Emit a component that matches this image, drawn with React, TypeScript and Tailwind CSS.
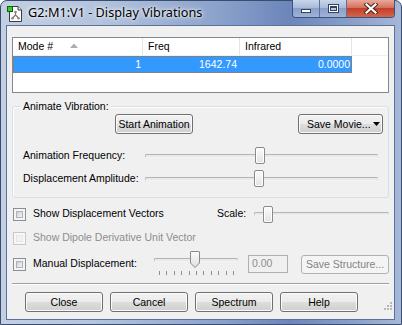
import React from "react";

function Btn({
  children,
  className = "",
  disabled = false,
}: {
  children: React.ReactNode;
  className?: string;
  disabled?: boolean;
}) {
  return (
    <div
      className={
        "flex items-center justify-center rounded-[3px] border text-[10.5px] leading-none " +
        (disabled
          ? "border-[#adb2b5] bg-[#f4f4f4] text-[#838383] "
          : "border-[#707070] bg-[linear-gradient(#f2f2f2_0%,#ebebeb_50%,#dddddd_50%,#cfcfcf_100%)] text-black shadow-[inset_0_0_0_1px_#fbfbfb] ") +
        className
      }
    >
      {children}
    </div>
  );
}

function Thumb() {
  return (
    <div className="w-[10px] h-[17px] rounded-[2px] border border-[#8a8a8a] bg-[linear-gradient(#fbfbfb,#e3e3e3)] shadow-[inset_0_0_0_1px_#ffffff]" />
  );
}

function Track({ className = "" }: { className?: string }) {
  return (
    <div className={"h-[4px] rounded-[1px] border border-t-[#b4b4b4] border-l-[#c8c8c8] border-r-[#e0e0e0] border-b-[#f4f4f4] bg-[#e7eaea] " + className} />
  );
}

function Check({ disabled = false }: { disabled?: boolean }) {
  return (
    <div
      className={
        "w-[13px] h-[13px] border p-[2px] " +
        (disabled ? "border-[#c8c8c8] bg-[#f7f7f7]" : "border-[#8e8f8f] bg-[#f4f4f4]")
      }
    >
      <div
        className={
          "w-full h-full border " +
          (disabled
            ? "border-[#e6e6e6] bg-[#f2f2f2]"
            : "border-[#aeb3b9] bg-[linear-gradient(135deg,#cbcfd5,#f6f6f6)]")
        }
      />
    </div>
  );
}

export default function App() {
  return (
    <div className="w-[402px] h-[325px] overflow-hidden font-['Liberation_Sans',Arial,sans-serif] text-[10.5px] text-black">
      <div className="w-[402px] h-[325px] flex flex-col rounded-t-[7px] border border-[#3a4d6e] bg-[linear-gradient(90deg,#c3d0e3_0%,#b2c3dc_25%,#8aa1cb_55%,#6c86bb_72%,#8aa0c9_88%,#a6b8d8_100%)]">
        {/* Title bar */}
        <div className="h-[24px] flex items-center pl-[6px] pr-[6px] shrink-0">
          <svg width="16" height="17" viewBox="0 0 16 17" className="shrink-0">
            <path d="M2.5 1.5 H11 L14.5 5 V16.5 H2.5 Z" fill="#ffffff" stroke="#3a3a3a" />
            <path d="M11 1.5 V5 H14.5" fill="#e8e8e8" stroke="#3a3a3a" />
            <rect x="0.5" y="1.5" width="5" height="5" fill="#2fd12f" stroke="#136013" />
            <path d="M8.5 7 V10 M8.5 10 L5.5 13 M8.5 10 L11.5 13" stroke="#7a7a7a" strokeWidth="1.2" />
            <circle cx="8.5" cy="7" r="1.3" fill="#8a8a8a" />
            <circle cx="5.5" cy="13.3" r="1.3" fill="#8a8a8a" />
            <circle cx="11.5" cy="13.3" r="1.3" fill="#8a8a8a" />
          </svg>
          <div className="ml-[5px] text-[12.7px] font-['Noto_Sans',sans-serif] text-black [text-shadow:0_0_6px_#ffffff,0_0_3px_#ffffff] whitespace-nowrap">
            G2:M1:V1 - Display Vibrations
          </div>
          <div className="ml-auto self-start -mt-[1px] flex h-[18px] rounded-b-[4px] border border-t-0 border-[#3c5380] overflow-hidden">
            <div className="w-[27px] h-full flex items-end justify-center pb-[4px] border-r border-[#5a709a] bg-[linear-gradient(#c9d6ea_0%,#a9bbd9_45%,#8aa0c9_50%,#9fb3d6_100%)]">
              <div className="w-[10px] h-[4px] bg-white border border-[#33435f]" />
            </div>
            <div className="w-[27px] h-full flex items-center justify-center border-r border-[#5a709a] bg-[linear-gradient(#c9d6ea_0%,#a9bbd9_45%,#8aa0c9_50%,#9fb3d6_100%)]">
              <div className="w-[11px] h-[9px] border border-[#33435f] bg-white p-[1px]">
                <div className="w-full h-full border border-[#33435f] border-t-2 bg-[#b8c6de]" />
              </div>
            </div>
            <div className="w-[47px] h-full flex items-center justify-center bg-[linear-gradient(#e9a99b_0%,#d6705d_45%,#c2402a_50%,#d5654c_100%)]">
              <svg width="14" height="11" viewBox="0 0 14 11">
                <path d="M2.5 1.5 L11.5 9.5 M11.5 1.5 L2.5 9.5" stroke="#4a2420" strokeWidth="4.2" strokeLinecap="square" />
                <path d="M2.5 1.5 L11.5 9.5 M11.5 1.5 L2.5 9.5" stroke="#ffffff" strokeWidth="2.2" strokeLinecap="square" />
              </svg>
            </div>
          </div>
        </div>

        {/* Client area */}
        <div className="ml-[5px] mr-[6px] h-[295px] shrink-0 border border-[#5d7299] bg-[#f0f0f0] flex flex-col px-[5px]">
          {/* List view */}
          <div className="mt-[11px] h-[56px] border border-[#828790] bg-white flex flex-col shrink-0">
            <div className="h-[18px] flex items-center border-b border-[#f0f0f0]">
              <div className="w-[130px] h-full flex items-center pl-[5px] border-r border-[#e5e5e5] relative">
                <span>Mode #</span>
                <svg width="8" height="5" viewBox="0 0 8 5" className="ml-[17px] mb-[2px]">
                  <path d="M0 5 L4 0.5 L8 5 Z" fill="#a8acb3" />
                </svg>
              </div>
              <div className="w-[97px] h-full flex items-center pl-[5px] border-r border-[#e5e5e5]">Freq</div>
              <div className="w-[112px] h-full flex items-center pl-[5px] border-r border-[#e5e5e5]">Infrared</div>
            </div>
            <div className="h-[17px] w-[339px] bg-[#3399ff] text-white border border-dotted border-[#c86a10] flex items-center">
              <div className="w-[128px] text-right pr-[1px]">1</div>
              <div className="w-[97px] text-right pr-[2px]">1642.74</div>
              <div className="w-[112px] text-right pr-[1px]">0.0000</div>
            </div>
          </div>

          {/* Group box */}
          <div className="mt-[13px] h-[92px] relative rounded-[3px] border border-[#d5dfe5] shadow-[inset_1px_1px_0_#ffffff] flex flex-col shrink-0">
            <div className="absolute left-[8px] -top-[8px] px-[2px] bg-[#f0f0f0] leading-[14px]">Animate Vibration:</div>
            <div className="mt-[7px] h-[20px] flex">
              <Btn className="ml-[102px] w-[78px] h-[20px]">Start Animation</Btn>
              <Btn className="ml-auto mr-[5px] w-[85px] h-[20px] justify-start pl-[8px]">
                <span>Save Movie...</span>
                <svg width="7" height="4" viewBox="0 0 7 4" className="ml-[2px]">
                  <path d="M0 0 H7 L3.5 4 Z" fill="#000" />
                </svg>
              </Btn>
            </div>
            <div className="mt-[13px] h-[17px] flex items-center">
              <div className="pl-[10px] w-[132px]">Animation Frequency:</div>
              <div className="relative w-[233px] h-[17px] flex items-center">
                <Track className="w-full" />
                <div className="absolute left-[110px] top-0">
                  <Thumb />
                </div>
              </div>
            </div>
            <div className="mt-[6px] h-[17px] flex items-center">
              <div className="pl-[10px] w-[132px]">Displacement Amplitude:</div>
              <div className="relative w-[233px] h-[17px] flex items-center">
                <Track className="w-full" />
                <div className="absolute left-[109px] top-0">
                  <Thumb />
                </div>
              </div>
            </div>
          </div>

          {/* Show Displacement Vectors */}
          <div className="mt-[4px] h-[24px] flex items-center shrink-0">
            <div className="ml-[1px]">
              <Check />
            </div>
            <div className="ml-[7px] w-[184px]">Show Displacement Vectors</div>
            <div className="w-[37px]">Scale:</div>
            <div className="relative w-[135px] h-[17px] flex items-center">
              <Track className="w-full" />
              <div className="absolute left-[9px] top-0">
                <Thumb />
              </div>
            </div>
          </div>

          {/* Dipole */}
          <div className="h-[24px] flex items-center shrink-0">
            <div className="ml-[1px]">
              <Check disabled />
            </div>
            <div className="ml-[7px] text-[#8d8d8d]">Show Dipole Derivative Unit Vector</div>
          </div>

          {/* Manual displacement */}
          <div className="h-[28px] flex items-center shrink-0">
            <div className="ml-[1px]">
              <Check />
            </div>
            <div className="ml-[7px] w-[121px]">Manual Displacement:</div>
            <div className="relative w-[85px] h-[28px]">
              <Track className="absolute left-0 top-[8px] w-[84px]" />
              <svg width="10" height="17" viewBox="0 0 10 17" className="absolute left-[36px] top-[1px]">
                <defs>
                  <linearGradient id="tg" x1="0" y1="0" x2="0" y2="1">
                    <stop offset="0" stopColor="#fbfbfb" />
                    <stop offset="1" stopColor="#e0e0e0" />
                  </linearGradient>
                </defs>
                <path d="M1 0.5 H9 Q9.5 0.5 9.5 1 V12 L5 16.5 L0.5 12 V1 Q0.5 0.5 1 0.5 Z" fill="url(#tg)" stroke="#8a8a8a" />
              </svg>
              <div className="absolute left-[5px] top-[21px] w-[75px] h-[4px] flex justify-between">
                {Array.from({ length: 11 }).map((_, i) => (
                  <div key={i} className="w-[1px] h-[4px] bg-[#8f8f8f]" />
                ))}
              </div>
            </div>
            <div className="ml-[9px] w-[40px] h-[18px] border border-[#afafaf] bg-[#f0f0f0] text-[#8d8d8d] flex items-center pl-[3px]">
              0.00
            </div>
            <Btn disabled className="ml-[13px] w-[88px] h-[19px]">
              Save Structure...
            </Btn>
          </div>

          {/* Separator */}
          <div className="mt-[5px] h-[2px] border-t border-[#a0a0a0] border-b border-b-white shrink-0" />

          {/* Bottom buttons */}
          <div className="mt-[7px] h-[20px] flex gap-[7px] pl-[13px] shrink-0 relative">
            <Btn className="w-[78px] h-[20px]">Close</Btn>
            <Btn className="w-[78px] h-[20px]">Cancel</Btn>
            <Btn className="w-[78px] h-[20px]">Spectrum</Btn>
            <Btn className="w-[78px] h-[20px]">Help</Btn>
            <svg width="10" height="10" viewBox="0 0 10 10" className="ml-auto mt-[9px] mr-[-4px]">
              <g fill="#b9b9b9">
                <rect x="7" y="1" width="2" height="2" />
                <rect x="4" y="4" width="2" height="2" />
                <rect x="7" y="4" width="2" height="2" />
                <rect x="1" y="7" width="2" height="2" />
                <rect x="4" y="7" width="2" height="2" />
                <rect x="7" y="7" width="2" height="2" />
              </g>
            </svg>
          </div>
        </div>
      </div>
    </div>
  );
}
